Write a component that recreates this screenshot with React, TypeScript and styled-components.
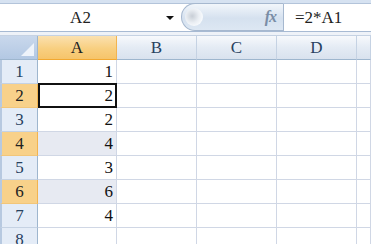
import React from 'react';
import styled, { createGlobalStyle, css } from 'styled-components';

const serif = `"Liberation Serif", "DejaVu Serif", "Times New Roman", serif`;

const GlobalStyle = createGlobalStyle`
  html, body {
    margin: 0;
    padding: 0;
    background: #ffffff;
    overflow: hidden;
  }
  body {
    font-family: ${serif};
    color: #222;
  }
`;

const Window = styled.div`
  width: 371px;
  height: 244px;
  overflow: hidden;
  display: flex;
  flex-direction: column;
  font-family: ${serif};
  & > * {
    flex-shrink: 0;
  }
`;

const TopStrip = styled.div`
  height: 3px;
  background: #d6e2f1;
  border-bottom: 1px solid #b3c4da;
`;

const FormulaBar = styled.div`
  display: flex;
  height: 27px;
  background: #ffffff;
  border-bottom: 1px solid #a7bad3;
`;

const NameBox = styled.div`
  width: 181px;
  flex-shrink: 0;
  display: flex;
  align-items: center;
  position: relative;
  font-size: 17px;
`;

const NameText = styled.span`
  flex: 1;
  text-align: center;
  padding-right: 20px;
`;

const DropArrow = styled.span`
  position: absolute;
  right: 7px;
  top: 12px;
  width: 0;
  height: 0;
  border-left: 4px solid transparent;
  border-right: 4px solid transparent;
  border-top: 4px solid #111;
`;

const FxPill = styled.div`
  width: 102px;
  flex-shrink: 0;
  margin-top: -1px;
  height: 28px;
  border: 1px solid #a6b8cf;
  border-radius: 14px 0 0 14px;
  border-right: none;
  background: linear-gradient(#f2f6fb, #d5e1ef 55%, #dde7f3);
  display: flex;
  align-items: center;
  justify-content: flex-end;
  padding-right: 7px;
  box-sizing: border-box;
  position: relative;
`;

const Knob = styled.span`
  position: absolute;
  left: 3px;
  top: 4px;
  width: 18px;
  height: 18px;
  border-radius: 50%;
  background: radial-gradient(circle at 40% 45%, #c8ced6 0, #eaeef3 45%, #f6f9fc 70%);
`;

const FxLabel = styled.span`
  font-style: italic;
  font-weight: bold;
  font-size: 16px;
  color: #7a8da6;
  letter-spacing: -1px;
`;

const FormulaInput = styled.div`
  flex: 1;
  border-left: 1px solid #a6b8cf;
  display: flex;
  align-items: center;
  padding-left: 11px;
  font-size: 17px;
`;

const Gap = styled.div`
  height: 3px;
  background: #eef2f8;
  border-bottom: 1px solid #c5d2e3;
`;

const Grid = styled.div`
  display: grid;
  grid-template-columns: 38px 79px 80px 80px 80px 1fr;
  grid-template-rows: 24px repeat(8, 24px);
`;

const Corner = styled.div`
  background: linear-gradient(#c9d8ec, #b3c8e3);
  border-right: 1px solid #9eb6ce;
  border-bottom: 1px solid #9eb6ce;
  position: relative;
  box-sizing: border-box;
  &::after {
    content: '';
    position: absolute;
    right: 3px;
    bottom: 3px;
    width: 0;
    height: 0;
    border-left: 13px solid transparent;
    border-bottom: 13px solid #eef3fa;
  }
`;

const ColHead = styled.div<{ $active?: boolean }>`
  box-sizing: border-box;
  display: flex;
  align-items: center;
  justify-content: center;
  font-size: 17px;
  color: #27415f;
  border-right: 1px solid #c5d2e3;
  border-bottom: 1px solid #9eb6ce;
  background: linear-gradient(#f7f9fc, #e4ebf4 50%, #d9e2ee);
  ${(p) =>
    p.$active &&
    css`
      background: linear-gradient(#fbe1b0, #f8cf80 55%, #f6c46a);
      border-right-color: #f2b450;
      border-bottom-color: #f2a830;
      color: #222;
    `}
`;

const RowHead = styled.div<{ $active?: boolean }>`
  box-sizing: border-box;
  display: flex;
  align-items: center;
  justify-content: center;
  font-size: 17px;
  color: #27415f;
  background: #e4ecf7;
  border-left: 2px solid #b7c9e0;
  border-right: 1px solid #9eb6ce;
  border-bottom: 1px solid #c5d2e3;
  ${(p) =>
    p.$active &&
    css`
      background: #f8d18a;
      border-right-color: #f2b450;
      border-bottom-color: #f2c67a;
      color: #222;
    `}
`;

const Cell = styled.div<{ $tint?: boolean; $current?: boolean }>`
  box-sizing: border-box;
  display: flex;
  align-items: center;
  justify-content: flex-end;
  padding-right: 3px;
  font-size: 17px;
  color: #111;
  border-right: 1px solid #d0d7e5;
  border-bottom: 1px solid #d0d7e5;
  background: ${(p) => (p.$tint ? '#e7eaf2' : '#ffffff')};
  ${(p) =>
    p.$current &&
    css`
      border: 2px solid #111;
      padding-right: 2px;
      margin: -1px 0 0 0;
      height: 25px;
    `}
`;

const columns = ['A', 'B', 'C', 'D', ''];
const values = [1, 2, 2, 4, 3, 6, 4, null];
const selectedRows = [2, 4, 6];

export default function App() {
  return (
    <Window>
      <GlobalStyle />
      <TopStrip />
      <FormulaBar>
        <NameBox>
          <NameText>A2</NameText>
          <DropArrow />
        </NameBox>
        <FxPill>
          <Knob />
          <FxLabel>fx</FxLabel>
        </FxPill>
        <FormulaInput>=2*A1</FormulaInput>
      </FormulaBar>
      <Gap />
      <Grid>
        <Corner />
        {columns.map((c, i) => (
          <ColHead key={i} $active={c === 'A'}>
            {c}
          </ColHead>
        ))}
        {values.map((v, r) => {
          const row = r + 1;
          const sel = selectedRows.includes(row);
          return (
            <React.Fragment key={row}>
              <RowHead $active={sel}>{row}</RowHead>
              <Cell $tint={sel && row !== 2} $current={row === 2}>
                {v ?? ''}
              </Cell>
              <Cell />
              <Cell />
              <Cell />
              <Cell />
            </React.Fragment>
          );
        })}
      </Grid>
    </Window>
  );
}
